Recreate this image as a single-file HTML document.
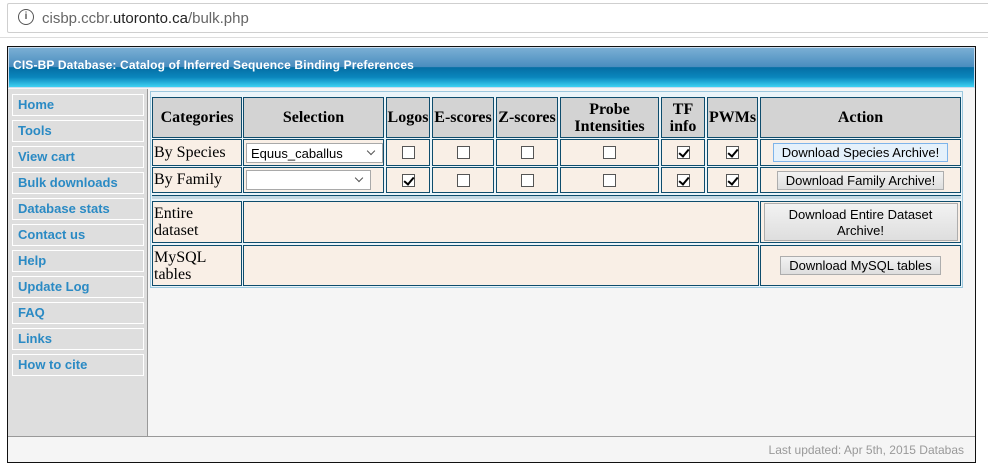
<!DOCTYPE html>
<html><head><meta charset="utf-8"><style>
*{box-sizing:border-box;margin:0;padding:0}
body{width:988px;height:473px;background:#fff;position:relative;overflow:hidden;font-family:"Liberation Serif",serif}
.a{position:absolute}
.url{left:7px;top:3px;width:990px;height:30px;border:1px solid #cfcfcf;border-radius:2px;background:#fff;font:15px "Liberation Sans",sans-serif;color:#666;padding:6px 0 0 34px}
.url b{font-weight:normal;color:#222}
.frame{left:7px;top:46px;width:969px;height:417px;border:1px solid #111;background:#f5f5f5}
.hdr{left:8px;top:47px;width:967px;height:41px;border:1px solid #cde;background:linear-gradient(#7aafd4 0%,#4a8dbf 48%,#056ea4 50%,#0a86bd 75%,#3fd2f2 100%);color:#fff;font:bold 12px "Liberation Sans",sans-serif;padding:10px 0 0 4px;letter-spacing:0.15px}
.nav{left:8px;top:89px;width:140px;height:347px;background:#dedede;border-right:1px solid #999}
.ni{position:absolute;left:4px;width:132px;height:22px;border:1px solid #fff;color:#2a8ac4;font:bold 13px "Liberation Sans",sans-serif;padding:2px 0 0 5px}
.foot{left:8px;top:436px;width:967px;height:26px;border-top:1px solid #999;font:12px "Liberation Sans",sans-serif;color:#999;text-align:right;padding:6px 11px 0 0;white-space:nowrap;overflow:hidden}
.tbl{left:150px;top:91px;width:813px;height:197px;background:#eaf4f9;border:1px solid #9cc8de}
.c{position:absolute;border:1px solid #0e4c6c;background:#f9efe6;font-size:16px;color:#000;display:flex;align-items:center}
.h{background:#d3d3d3;font-weight:bold;justify-content:center;text-align:center;line-height:17px}
.cc{justify-content:center}
.cb{width:13px;height:13px;border:1px solid #555;background:#fff;position:relative}
.cb.k::after{content:"";position:absolute;left:3px;top:0px;width:4px;height:8px;border:solid #000;border-width:0 2px 2px 0;transform:rotate(40deg)}
.sel{height:20px;border:1px solid #a9a9a9;background:#fff;font:13px "Liberation Sans",sans-serif;padding:2px 0 0 4px;position:relative}
.sel::after{content:"";position:absolute;right:8px;top:4px;width:5px;height:5px;border:solid #555;border-width:0 1px 1px 0;transform:rotate(45deg)}
.btn{font:13px "Liberation Sans",sans-serif;background:linear-gradient(#f2f2f2,#dedede);border:1px solid #adadad;text-align:center;padding:1px 8px;margin:auto}
</style></head><body>
<div class="a url"><span class="a" style="left:10px;top:5px;width:16px;height:16px;border:1.5px solid #555;border-radius:50%;font:bold 10px 'Liberation Sans';color:#555;text-align:center;line-height:13px">i</span>cisbp.ccbr.<b>utoronto.ca</b>/bulk.php</div>
<div class="a" style="left:0;top:37px;width:988px;height:1px;background:#ddd"></div>
<div class="a frame"></div>
<div class="a hdr">CIS-BP Database: Catalog of Inferred Sequence Binding Preferences</div>
<div class="a nav">
<div class="ni" style="top:5px">Home</div>
<div class="ni" style="top:31px">Tools</div>
<div class="ni" style="top:57px">View cart</div>
<div class="ni" style="top:83px">Bulk downloads</div>
<div class="ni" style="top:109px">Database stats</div>
<div class="ni" style="top:135px">Contact us</div>
<div class="ni" style="top:161px">Help</div>
<div class="ni" style="top:187px">Update Log</div>
<div class="ni" style="top:213px">FAQ</div>
<div class="ni" style="top:239px">Links</div>
<div class="ni" style="top:265px">How to cite</div>
</div>
<div class="a foot">Last updated: Apr 5th, 2015 Databas</div>
<div class="a tbl"></div>
<!-- header -->
<div class="c h" style="left:152px;top:97px;width:90px;height:41px">Categories</div>
<div class="c h" style="left:243px;top:97px;width:141px;height:41px">Selection</div>
<div class="c h" style="left:386px;top:97px;width:44px;height:41px">Logos</div>
<div class="c h" style="left:432px;top:97px;width:62px;height:41px">E-scores</div>
<div class="c h" style="left:496px;top:97px;width:62px;height:41px">Z-scores</div>
<div class="c h" style="left:560px;top:97px;width:99px;height:41px">Probe<br>Intensities</div>
<div class="c h" style="left:661px;top:97px;width:44px;height:41px">TF<br>info</div>
<div class="c h" style="left:707px;top:97px;width:51px;height:41px">PWMs</div>
<div class="c h" style="left:760px;top:97px;width:201px;height:41px">Action</div>
<!-- row1 -->
<div class="c" style="left:152px;top:139px;width:90px;height:27px;padding-left:1px">By Species</div>
<div class="c" style="left:243px;top:139px;width:141px;height:27px;padding-left:2px"><div class="sel" style="width:137px">Equus_caballus</div></div>
<div class="c cc" style="left:386px;top:139px;width:44px;height:27px"><div class="cb"></div></div>
<div class="c cc" style="left:432px;top:139px;width:62px;height:27px"><div class="cb"></div></div>
<div class="c cc" style="left:496px;top:139px;width:62px;height:27px"><div class="cb"></div></div>
<div class="c cc" style="left:560px;top:139px;width:99px;height:27px"><div class="cb"></div></div>
<div class="c cc" style="left:661px;top:139px;width:44px;height:27px"><div class="cb k"></div></div>
<div class="c cc" style="left:707px;top:139px;width:51px;height:27px"><div class="cb k"></div></div>
<div class="c" style="left:760px;top:139px;width:201px;height:27px"><div class="btn" style="background:#e5f1fb;border-color:#7eb4ea">Download Species Archive!</div></div>
<!-- row2 -->
<div class="c" style="left:152px;top:167px;width:90px;height:26px;padding-left:1px">By Family</div>
<div class="c" style="left:243px;top:167px;width:141px;height:26px;padding-left:2px"><div class="sel" style="width:125px"></div></div>
<div class="c cc" style="left:386px;top:167px;width:44px;height:26px"><div class="cb k"></div></div>
<div class="c cc" style="left:432px;top:167px;width:62px;height:26px"><div class="cb"></div></div>
<div class="c cc" style="left:496px;top:167px;width:62px;height:26px"><div class="cb"></div></div>
<div class="c cc" style="left:560px;top:167px;width:99px;height:26px"><div class="cb"></div></div>
<div class="c cc" style="left:661px;top:167px;width:44px;height:26px"><div class="cb k"></div></div>
<div class="c cc" style="left:707px;top:167px;width:51px;height:26px"><div class="cb k"></div></div>
<div class="c" style="left:760px;top:167px;width:201px;height:26px"><div class="btn">Download Family Archive!</div></div>
<!-- separator -->
<div class="a" style="left:152px;top:195px;width:809px;height:4px;background:#c5d8e2;border-top:1px solid #0e4c6c"></div>
<!-- row3 -->
<div class="c" style="left:152px;top:201px;width:90px;height:42px;line-height:17px;padding-left:1px">Entire<br>dataset</div>
<div class="c" style="left:243px;top:201px;width:516px;height:42px"></div>
<div class="c" style="left:760px;top:201px;width:201px;height:42px"><div class="btn" style="width:194px;height:38px;padding-top:3px;line-height:16px">Download Entire Dataset<br>Archive!</div></div>
<!-- row4 -->
<div class="c" style="left:152px;top:245px;width:90px;height:41px;line-height:17px;padding-left:1px">MySQL<br>tables</div>
<div class="c" style="left:243px;top:245px;width:516px;height:41px"></div>
<div class="c" style="left:760px;top:245px;width:201px;height:41px"><div class="btn">Download MySQL tables</div></div>
</body></html>
